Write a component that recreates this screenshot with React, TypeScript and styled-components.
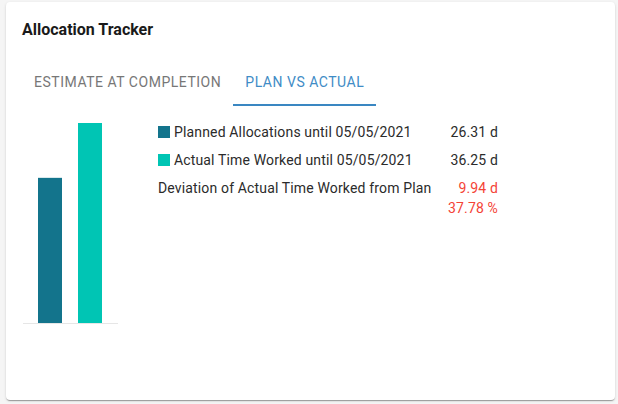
import React, { useState } from 'react';
import styled, { createGlobalStyle } from 'styled-components';

const GlobalStyle = createGlobalStyle`
  body {
    margin: 0;
    background: #f5f5f5;
    font-family: Roboto, "Liberation Sans", Arial, sans-serif;
    color: rgba(0, 0, 0, 0.87);
  }
`;

const Card = styled.div`
  margin: 2px 3px 4px 6px;
  height: 398px;
  background: #fff;
  border-radius: 4px;
  box-shadow: 0 2px 1px -1px rgba(0, 0, 0, 0.2), 0 1px 1px 0 rgba(0, 0, 0, 0.14),
    0 1px 3px 0 rgba(0, 0, 0, 0.12);
  box-sizing: border-box;
  padding: 16px 16px 0 16px;
`;

const Title = styled.h2`
  margin: 0;
  font-size: 16px;
  line-height: 24px;
  font-weight: 700;
  color: #1a1a1a;
`;

const TabBar = styled.div`
  display: flex;
  margin-top: 16px;
  height: 48px;
`;

const Tab = styled.button<{ $active?: boolean }>`
  position: relative;
  background: none;
  border: none;
  padding: 0 12px;
  height: 48px;
  font-family: inherit;
  font-size: 14px;
  font-weight: 400;
  letter-spacing: 0.52px;
  text-transform: uppercase;
  color: ${(p) => (p.$active ? '#3f8cc6' : '#777777')};
  cursor: pointer;

  &::after {
    content: '';
    position: absolute;
    left: 0;
    right: 0;
    bottom: 0;
    height: 2px;
    background: ${(p) => (p.$active ? '#3a87c2' : 'transparent')};
  }
`;

const Content = styled.div`
  display: flex;
  align-items: flex-start;
  padding: 12px 0 0 1px;
`;

const Legend = styled.div`
  display: grid;
  grid-template-columns: 1fr auto;
  align-items: start;
  row-gap: 8px;
  width: 340px;
  margin: 4px 0 0 40px;
  font-size: 14px;
  line-height: 20px;
  letter-spacing: 0.15px;
  color: #2b2b2b;
`;

const Label = styled.div`
  display: flex;
  align-items: center;
  gap: 4px;
`;

const Swatch = styled.span<{ $color: string }>`
  width: 12px;
  height: 12px;
  background: ${(p) => p.$color};
`;

const Value = styled.div<{ $bad?: boolean }>`
  text-align: right;
  color: ${(p) => (p.$bad ? '#f44336' : '#2b2b2b')};
`;

const PLAN = '#13748c';
const ACTUAL = '#00c5b4';

const rows = [
  { color: PLAN, label: 'Planned Allocations until 05/05/2021', value: 26.31 },
  { color: ACTUAL, label: 'Actual Time Worked until 05/05/2021', value: 36.25 },
];

const BarChart: React.FC<{ values: number[] }> = ({ values }) => {
  const max = Math.max(...values);
  const base = 205;
  return (
    <svg width="95" height="207" viewBox="0 0 95 207">
      {values.map((v, i) => {
        const h = (v / max) * 200;
        return (
          <rect key={i} x={15 + i * 40} y={base - h} width="24" height={h} fill={i === 0 ? PLAN : ACTUAL} />
        );
      })}
      <line x1="0" x2="95" y1={base + 0.5} y2={base + 0.5} stroke="#e6e6e6" strokeWidth="1" />
    </svg>
  );
};

export default function App() {
  const [tab, setTab] = useState(1);
  const planned = rows[0].value;
  const actual = rows[1].value;
  const diff = actual - planned;
  const pct = (diff / planned) * 100;

  return (
    <>
      <GlobalStyle />
      <Card>
        <Title>Allocation Tracker</Title>
        <TabBar>
          <Tab $active={tab === 0} onClick={() => setTab(0)}>Estimate at Completion</Tab>
          <Tab $active={tab === 1} onClick={() => setTab(1)}>Plan vs Actual</Tab>
        </TabBar>
        <Content>
          <BarChart values={[planned, actual]} />
          <Legend>
            {rows.map((r) => (
              <React.Fragment key={r.label}>
                <Label>
                  <Swatch $color={r.color} />
                  {r.label}
                </Label>
                <Value>{r.value.toFixed(2)} d</Value>
              </React.Fragment>
            ))}
            <Label>Deviation of Actual Time Worked from Plan</Label>
            <Value $bad>
              {diff.toFixed(2)} d
              <br />
              {pct.toFixed(2)} %
            </Value>
          </Legend>
        </Content>
      </Card>
    </>
  );
}
